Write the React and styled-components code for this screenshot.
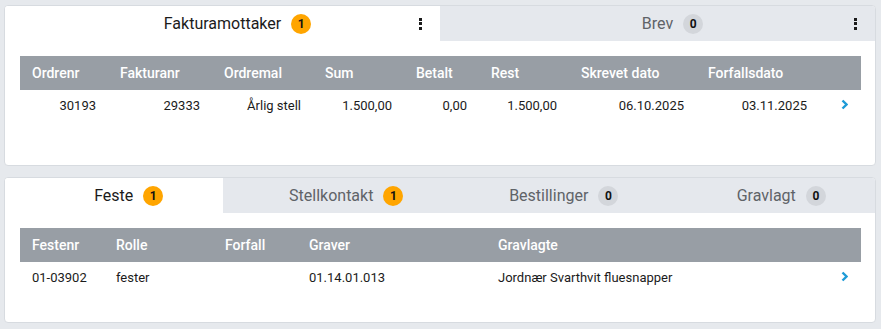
import React from 'react';
import styled, { createGlobalStyle } from 'styled-components';

const GlobalStyle = createGlobalStyle`
  html, body {
    margin: 0;
    padding: 0;
    background: #e6e9ed;
    font-family: Roboto, "Liberation Sans", Arial, sans-serif;
  }
`;

const Page = styled.div`
  width: 881px;
  height: 329px;
  box-sizing: border-box;
  padding: 5px 5px 0 4px;
  display: flex;
  flex-direction: column;
  gap: 11px;
`;

const Card = styled.div`
  background: #ffffff;
  border: 1px solid #d7dbe0;
  border-radius: 4px;
  overflow: hidden;
  padding-bottom: ${(p) => p.$bottom}px;
`;

const TabBar = styled.div`
  display: grid;
  grid-template-columns: repeat(${(p) => p.$count}, 1fr);
  height: 35px;
`;

const Tab = styled.div`
  position: relative;
  display: flex;
  align-items: center;
  justify-content: center;
  background: ${(p) => (p.$active ? '#ffffff' : '#e5e8ed')};
  color: ${(p) => (p.$active ? '#1b1b1b' : '#5f6368')};
  font-size: 16px;
`;

const Label = styled.span`
  position: relative;
`;

const Badge = styled.span`
  position: absolute;
  left: calc(100% + 10px);
  top: 50%;
  transform: translateY(-50%);
  width: 20px;
  height: 20px;
  border-radius: 50%;
  background: ${(p) => (p.$zero ? '#d3d6db' : '#ffa500')};
  color: #111;
  font-size: 12px;
  font-weight: 700;
  display: flex;
  align-items: center;
  justify-content: center;
`;

const Kebab = styled.div`
  position: absolute;
  right: 18px;
  top: 50%;
  transform: translateY(-50%);
  display: flex;
  flex-direction: column;
  gap: 1.5px;

  span {
    width: 3px;
    height: 3px;
    background: #1b1b1b;
  }
`;

const Body = styled.div`
  padding: 15px 14px 0 15px;
`;

const Table = styled.table`
  width: 841px;
  border-collapse: collapse;
  table-layout: fixed;
`;

const Th = styled.th`
  height: 34px;
  background: #989ea5;
  color: #ffffff;
  font-size: 14px;
  font-weight: 500;
  text-align: left;
  padding: 0 0 0 12px;
  white-space: nowrap;
`;

const Td = styled.td`
  height: 31px;
  color: #1b1b1b;
  font-size: 13px;
  text-align: ${(p) => (p.$right ? 'right' : 'left')};
  padding: ${(p) => (p.$right ? '0 12px 0 0' : '0 0 0 12px')};
  white-space: nowrap;
`;

const ArrowCell = styled.td`
  padding: 0 0 0 22px;
  vertical-align: middle;
`;

const Chevron = () => (
  <svg width="7" height="11" viewBox="0 0 7 11" style={{ display: 'block', marginTop: '-2px' }}>
    <path d="M1.5 1.5 L5.5 5.5 L1.5 9.5" fill="none" stroke="#1e9bd7" strokeWidth="2.4" />
  </svg>
);

const Dots = () => (
  <Kebab>
    <span />
    <span />
    <span />
  </Kebab>
);

const orderCols = [88, 104, 101, 91, 75, 90, 127, 123, 42];
const orderHead = ['Ordrenr', 'Fakturanr', 'Ordremal', 'Sum', 'Betalt', 'Rest', 'Skrevet dato', 'Forfallsdato'];
const orderRow = ['30193', '29333', 'Årlig stell', '1.500,00', '0,00', '1.500,00', '06.10.2025', '03.11.2025'];

const festeCols = [84, 109, 84, 189, 333, 42];
const festeHead = ['Festenr', 'Rolle', 'Forfall', 'Graver', 'Gravlagte'];
const festeRow = ['01-03902', 'fester', '', '01.14.01.013', 'Jordnær Svarthvit fluesnapper'];

const DataTable = ({ cols, head, row, right }) => (
  <Table>
    <colgroup>
      {cols.map((w, i) => (
        <col key={i} style={{ width: w }} />
      ))}
    </colgroup>
    <thead>
      <tr>
        {head.map((h) => (
          <Th key={h}>{h}</Th>
        ))}
        <Th />
      </tr>
    </thead>
    <tbody>
      <tr>
        {row.map((c, i) => (
          <Td key={i} $right={right}>
            {c}
          </Td>
        ))}
        <ArrowCell>
          <Chevron />
        </ArrowCell>
      </tr>
    </tbody>
  </Table>
);

const App = () => {
  return (
    <>
      <GlobalStyle />
      <Page>
        <Card $bottom={44}>
          <TabBar $count={2}>
            <Tab $active>
              <Label>
                Fakturamottaker
                <Badge>1</Badge>
              </Label>
              <Dots />
            </Tab>
            <Tab>
              <Label>
                Brev
                <Badge $zero>0</Badge>
              </Label>
              <Dots />
            </Tab>
          </TabBar>
          <Body>
            <DataTable cols={orderCols} head={orderHead} row={orderRow} right />
          </Body>
        </Card>

        <Card $bottom={29}>
          <TabBar $count={4}>
            <Tab $active>
              <Label>
                Feste
                <Badge>1</Badge>
              </Label>
            </Tab>
            <Tab>
              <Label>
                Stellkontakt
                <Badge>1</Badge>
              </Label>
            </Tab>
            <Tab>
              <Label>
                Bestillinger
                <Badge $zero>0</Badge>
              </Label>
            </Tab>
            <Tab>
              <Label>
                Gravlagt
                <Badge $zero>0</Badge>
              </Label>
            </Tab>
          </TabBar>
          <Body>
            <DataTable cols={festeCols} head={festeHead} row={festeRow} />
          </Body>
        </Card>
      </Page>
    </>
  );
};

export default App;
